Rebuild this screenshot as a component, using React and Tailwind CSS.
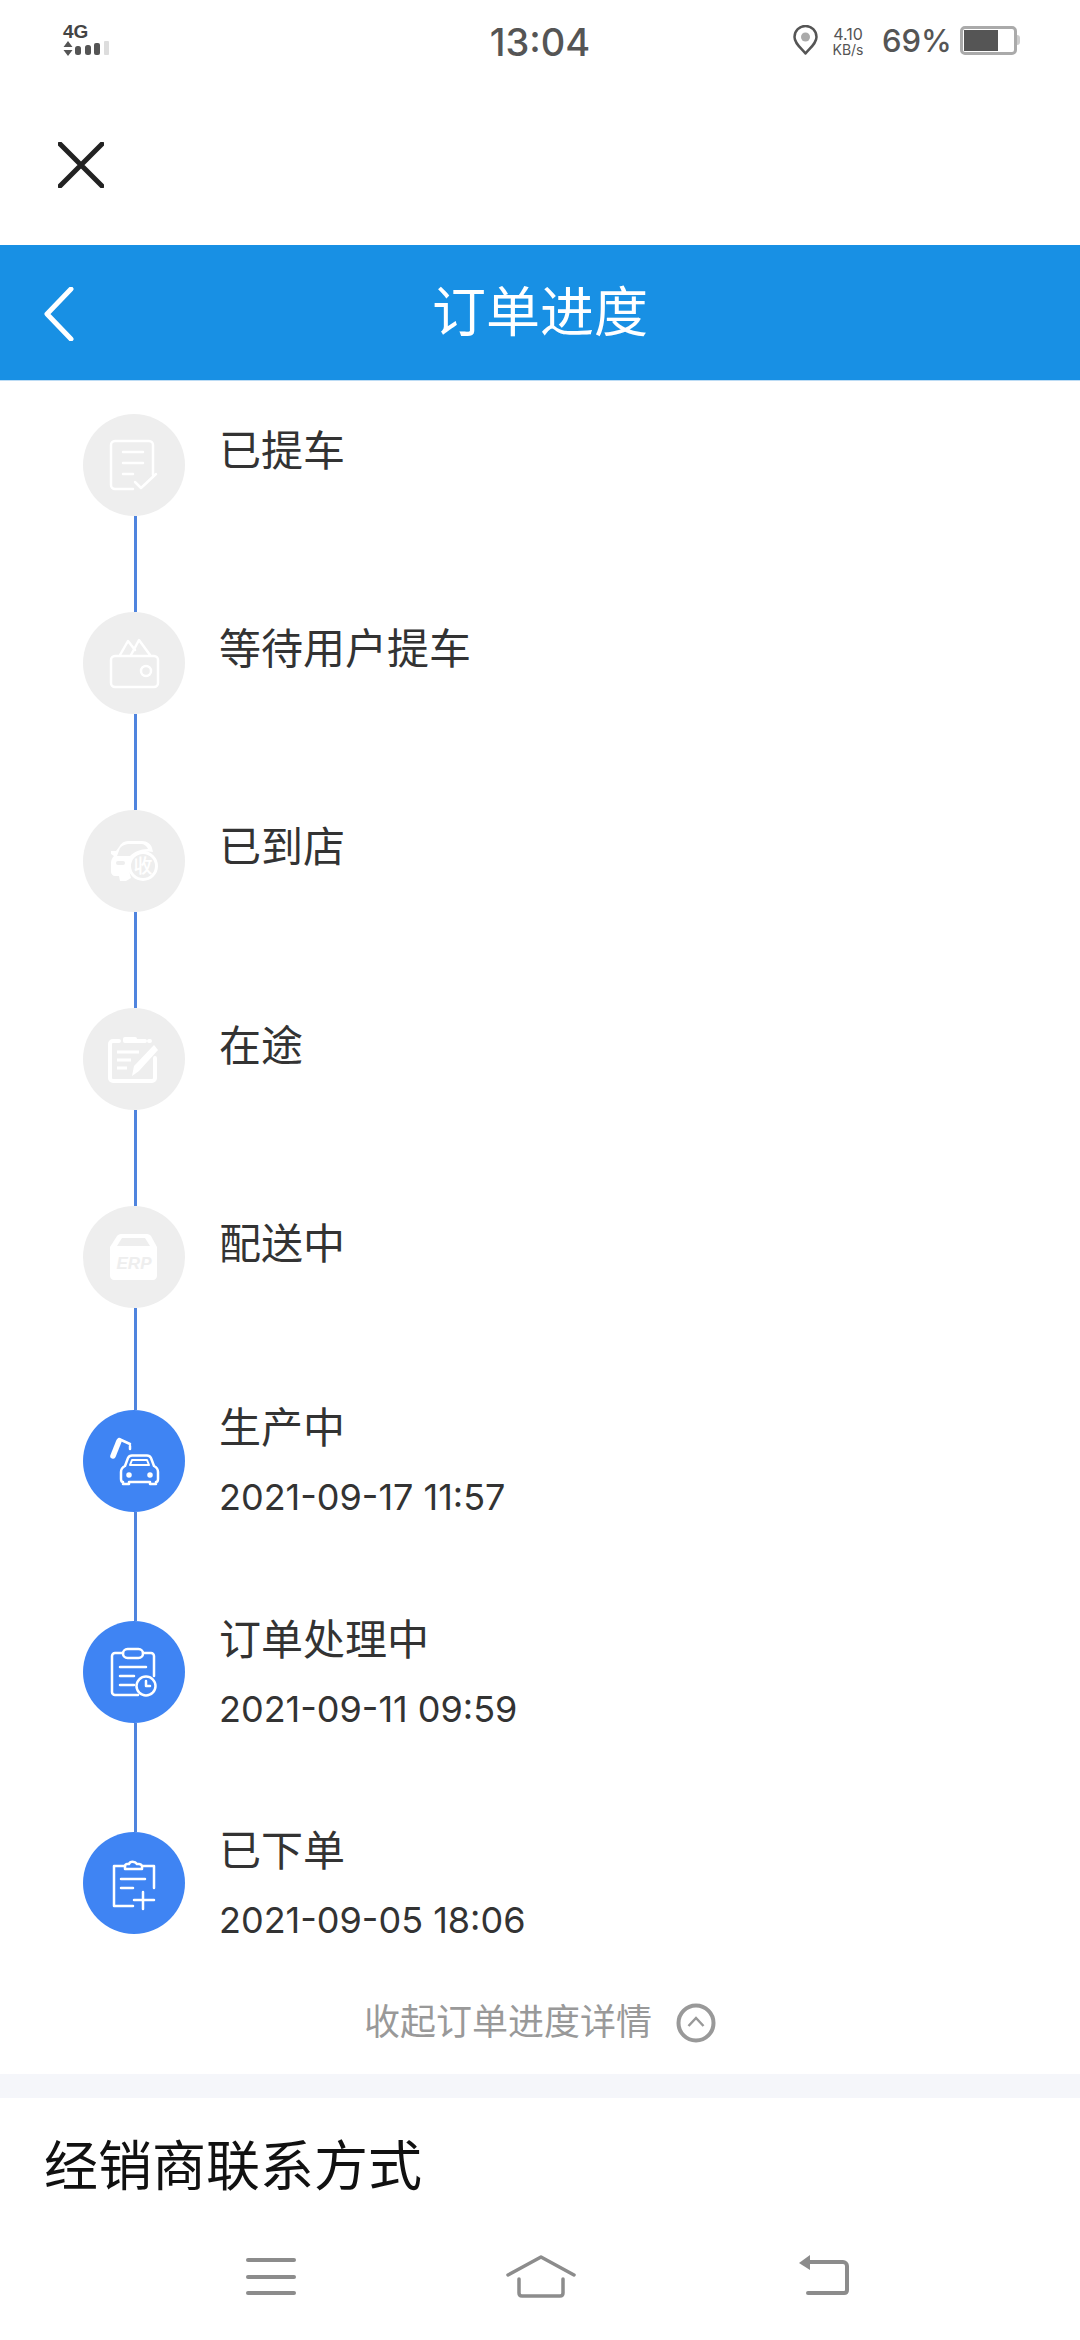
const cjk = "font-['Noto_Sans','Noto_Sans_CJK_SC',sans-serif]";
const digits = "font-['Inter','Noto_Sans_CJK_SC',sans-serif]";

function IconDoneDoc() {
  return (
    <g fill="none" stroke="#fff" strokeWidth="2.500" strokeLinecap="round" strokeLinejoin="round">
      <path d="M50 75H32a4 4 0 0 1-4-4V31a4 4 0 0 1 4-4h34a4 4 0 0 1 4 4v30" />
      <path d="M40 38h20M40 49h20M40 60h10" />
      <path d="M52 68l6 6 15-14" />
    </g>
  );
}

function IconWallet() {
  return (
    <g fill="none" stroke="#fff" strokeWidth="2.500" strokeLinecap="round" strokeLinejoin="round">
      <rect x="28" y="44" width="47" height="31" rx="4" />
      <circle cx="63" cy="59" r="5" />
      <path d="M37 43l8-14 7 9M48 43l8-15 11 15" />
    </g>
  );
}

function IconCarReceive() {
  return (
    <g>
      <path d="M36 37c2-4 5-6 9-6h14c5 0 9 3 10 7l1 4c-8-2-18 2-22 10-2 5-2 11 0 16l-5 3h-6l-1-5h-4c-2 0-4-2-4-4v-9c0-3 1-5 3-7l-3-2v-3h5z" fill="#fff" />
      <path d="M37 38c3-3 6-4 9-4h12c3 0 6 2 7 5-8 0-14 3-18 7H34z" fill="#eeeeee" />
      <rect x="33" y="51" width="9" height="4" rx="2" fill="#eeeeee" />
      <circle cx="60" cy="56" r="13.5" fill="#eeeeee" stroke="#fff" strokeWidth="3" />
      <text x="60" y="63" textAnchor="middle" fontSize="19" fontFamily="Noto Sans CJK SC" fontWeight="500" fill="#fff">收</text>
    </g>
  );
}

function IconNoteEdit() {
  return (
    <g>
      <path d="M36 33h-6a3 3 0 0 0-3 3v34a3 3 0 0 0 3 3h39a3 3 0 0 0 3-3V50M52 33h10M66 33h1" fill="none" stroke="#fff" strokeWidth="4" strokeLinecap="round" />
      <rect x="40" y="29" width="14" height="6" rx="2" fill="#fff" />
      <path d="M34 44h22M34 52h14M34 60h10" fill="none" stroke="#fff" strokeWidth="3" />
      <path d="M49 68l2-10 20-21 4 5-19 21z" fill="#fff" />
    </g>
  );
}

function IconBox() {
  return (
    <g>
      <path d="M38 28h26c2 0 3 1 4 2l6 11v29c0 2-2 4-4 4H31c-2 0-4-2-4-4V41l7-11c1-1 2-2 4-2z" fill="#fff" />
      <path d="M39 32h23l5 8H34z" fill="#eeeeee" />
      <text x="51" y="63" textAnchor="middle" fontSize="17" fontWeight="700" fontStyle="italic" fontFamily="Liberation Sans" fill="#eeeeee">ERP</text>
    </g>
  );
}

function IconProduction() {
  return (
    <g fill="none" stroke="#fff" strokeLinecap="round" strokeLinejoin="round">
      <path d="M30 46l6-15" strokeWidth="5.500" />
      <path d="M36 29l11 5M47 36v3" strokeWidth="2.500" />
      <path d="M38 62c0-3 2-5 4-6l3-8c1-2 2-2.500 4-2.500h15c2 0 3 .5 4 2.500l3 8c2 1 4 3 4 6v7c0 2-1 3-2 3v2h-6v-2H46v2h-6v-2c-1 0-2-1-2-3z" strokeWidth="2.500" />
      <path d="M47 55l2-5h15l2 5z" strokeWidth="2" />
      <circle cx="46" cy="65" r="2" fill="#fff" strokeWidth="1.500" />
      <circle cx="67" cy="65" r="2" fill="#fff" strokeWidth="1.500" />
    </g>
  );
}

function IconOrderClock() {
  return (
    <g fill="none" stroke="#fff" strokeWidth="2.500" strokeLinecap="round" strokeLinejoin="round">
      <path d="M40 32h-8a3 3 0 0 0-3 3v36a3 3 0 0 0 3 3h23M60 32h8a3 3 0 0 1 3 3v20" />
      <rect x="40" y="28" width="20" height="9" rx="4.5" />
      <path d="M37 46h26M37 55h14M37 64h14" />
      <circle cx="63" cy="65" r="9.5" />
      <path d="M63 60v5h4" />
    </g>
  );
}

function IconOrderPlus() {
  return (
    <g fill="none" stroke="#fff" strokeWidth="2.500" strokeLinecap="round" strokeLinejoin="round">
      <path d="M42 34H31v40h19M60 34h11v22" />
      <path d="M42 37v-3c0-1 1-2 2-2h2c1-3 6-3 8 0h2c1 0 3 1 3 2v3z" />
      <path d="M38 47h24M38 56h12" />
      <path d="M60 60v17M51 68h20" />
    </g>
  );
}

const steps = [
  { label: "已提车", Icon: IconDoneDoc, rowHeight: "h-[198px]", textTop: "mt-[15px]" },
  { label: "等待用户提车", Icon: IconWallet, rowHeight: "h-[198px]", textTop: "mt-[15px]" },
  { label: "已到店", Icon: IconCarReceive, rowHeight: "h-[198px]", textTop: "mt-[15px]" },
  { label: "在途", Icon: IconNoteEdit, rowHeight: "h-[198px]", textTop: "mt-[16px]" },
  { label: "配送中", Icon: IconBox, rowHeight: "h-[204px]", textTop: "mt-[16px]" },
  { label: "生产中", time: "2021-09-17 11:57", Icon: IconProduction, rowHeight: "h-[211px]", textTop: "-mt-[4px]" },
  { label: "订单处理中", time: "2021-09-11 09:59", Icon: IconOrderClock, rowHeight: "h-[211px]", textTop: "-mt-[3px]" },
  { label: "已下单", time: "2021-09-05 18:06", Icon: IconOrderPlus, rowHeight: "h-[102px]", textTop: "-mt-[3px]", last: true },
];

function StepRow({ step }) {
  const { Icon } = step;
  return (
    <div className={`flex ${step.rowHeight}`}>
      <div className="flex w-[102px] flex-col items-center">
        <div className={`h-[102px] w-[102px] shrink-0 rounded-full ${step.time ? "bg-[#3f84f3]" : "bg-[#eeeeee]"}`}>
          <svg width="102" height="102" viewBox="0 0 102 102">
            <Icon />
          </svg>
        </div>
        {!step.last && <div className="ml-[3px] w-[3px] flex-1 bg-[#4f84de]" />}
      </div>
      <div className={`ml-[34px] ${step.textTop}`}>
        <div className="h-[42px] text-[42px] leading-[42px] text-[#333333]">{step.label}</div>
        {step.time && (
          <div className={`mt-[28px] h-[42px] whitespace-nowrap text-[36px] leading-[42px] text-[#333333] ${digits}`}>{step.time}</div>
        )}
      </div>
    </div>
  );
}

function StatusBar() {
  return (
    <div className={`grid h-[80px] grid-cols-3 items-center text-[#555555] ${digits}`}>
      <div className="pl-[63px]">
        <div className="h-[16px] font-['Liberation_Sans',sans-serif] text-[19px] font-bold leading-[16px] text-[#444444]">4G</div>
        <svg width="47" height="16" viewBox="0 0 47 16" className="mt-[1px] block">
          <path d="M5 0l4.500 6H.5zM5 15l4.500-6H.5z" fill="#555" />
          <rect x="12" y="5" width="6" height="9" rx="2.500" fill="#555" />
          <rect x="22" y="4" width="6" height="10" rx="2.500" fill="#555" />
          <rect x="31" y="2" width="6" height="12" rx="2" fill="#555" />
          <rect x="41" y="0" width="5" height="14" rx="1" fill="#ddd" />
        </svg>
      </div>
      <div className="pt-[3px] text-center text-[38px] font-medium leading-none">13:04</div>
      <div className="flex items-center justify-end pr-[60px]">
        <svg width="25" height="30" viewBox="0 0 25 30">
          <path d="M12.5 28.5C7 22 1.5 18 1.5 12a11 11 0 0 1 22 0c0 6-5.500 10-11 16.500z" fill="none" stroke="#555" strokeWidth="2.500" strokeLinejoin="round" />
          <circle cx="12.500" cy="12" r="4.500" fill="#aaa" />
        </svg>
        <div className="ml-[11px] w-[38px] text-center">
          <div className="text-[16px] leading-[18px]">4.10</div>
          <div className="text-[14px] leading-[13px]">KB/s</div>
        </div>
        <div className="ml-[15px] w-[66px] whitespace-nowrap text-[31px] font-medium leading-none">69%</div>
        <div className="ml-[12px] flex items-center">
          <div className="h-[29px] w-[57px] rounded-[5px] border-[3px] border-[#aaaaaa] p-[1px]">
            <div className="h-full w-[34px] bg-[#555555]" />
          </div>
          <div className="h-[10px] w-[3px] rounded-r-sm bg-[#cccccc]" />
        </div>
      </div>
    </div>
  );
}

export default function App() {
  return (
    <div className={`flex h-[2340px] w-[1080px] flex-col overflow-hidden bg-white ${cjk}`}>
      <StatusBar />

      <div className="flex h-[165px] items-center pl-[58px] pt-[4px]">
        <svg width="46" height="46" viewBox="0 0 46 46">
          <path d="M2 2l42 42M44 2L2 44" stroke="#222222" strokeWidth="5" strokeLinecap="round" fill="none" />
        </svg>
      </div>

      <div className="relative flex h-[136px] items-center justify-center border-b border-[#bcdcf5] bg-[#1890e4]">
        <svg width="30" height="54" viewBox="0 0 30 54" className="absolute left-[44px] top-[42px]">
          <path d="M27 2L3 27l24 25" stroke="#fff" strokeWidth="5" strokeLinecap="round" strokeLinejoin="round" fill="none" />
        </svg>
        <span className="-mt-[3px] text-[54px] leading-none text-white">订单进度</span>
      </div>

      <div className="pl-[83px] pt-[33px]">
        {steps.map((step) => (
          <StepRow key={step.label} step={step} />
        ))}
      </div>

      <div className="flex h-[140px] items-center justify-center pt-[36px]">
        <span className="text-[36px] leading-none text-[#999999]">收起订单进度详情</span>
        <svg width="40" height="40" viewBox="0 0 40 40" className="ml-[24px] mt-[2px]">
          <circle cx="20" cy="20" r="17.500" stroke="#999999" strokeWidth="4" fill="none" />
          <path d="M12.500 23l7.500-8 7.500 8" stroke="#999999" strokeWidth="2.500" fill="none" />
        </svg>
      </div>

      <div className="h-[24px] bg-[#f5f6fa]" />

      <div className="flex h-[134px] items-center pl-[44px]">
        <span className="text-[54px] leading-none text-[#111111]">经销商联系方式</span>
      </div>

      <div className="flex h-[108px] items-start pt-[23px]">
        <div className="ml-[246px] mt-[3px] flex h-[37px] w-[50px] flex-col justify-between">
          <div className="h-[4px] rounded-sm bg-[#8c8c8c]" />
          <div className="h-[4px] rounded-sm bg-[#8c8c8c]" />
          <div className="h-[4px] rounded-sm bg-[#8c8c8c]" />
        </div>
        <svg width="70" height="43" viewBox="0 0 70 43" className="ml-[210px]">
          <path d="M2 20L35 2l33 18M13 24v14c0 2 1 3 3 3h38c2 0 3-1 3-3V24" stroke="#8c8c8c" strokeWidth="3.500" strokeLinecap="round" strokeLinejoin="round" fill="none" />
        </svg>
        <svg width="50" height="42" viewBox="0 0 50 42" className="ml-[223px]">
          <path d="M11 0v15L0 8z" fill="#8c8c8c" />
          <path d="M8 7h36c2 0 4 2 4 4v24c0 2-1 3-3 3H9" stroke="#8c8c8c" strokeWidth="4" strokeLinecap="round" fill="none" />
        </svg>
      </div>
    </div>
  );
}
